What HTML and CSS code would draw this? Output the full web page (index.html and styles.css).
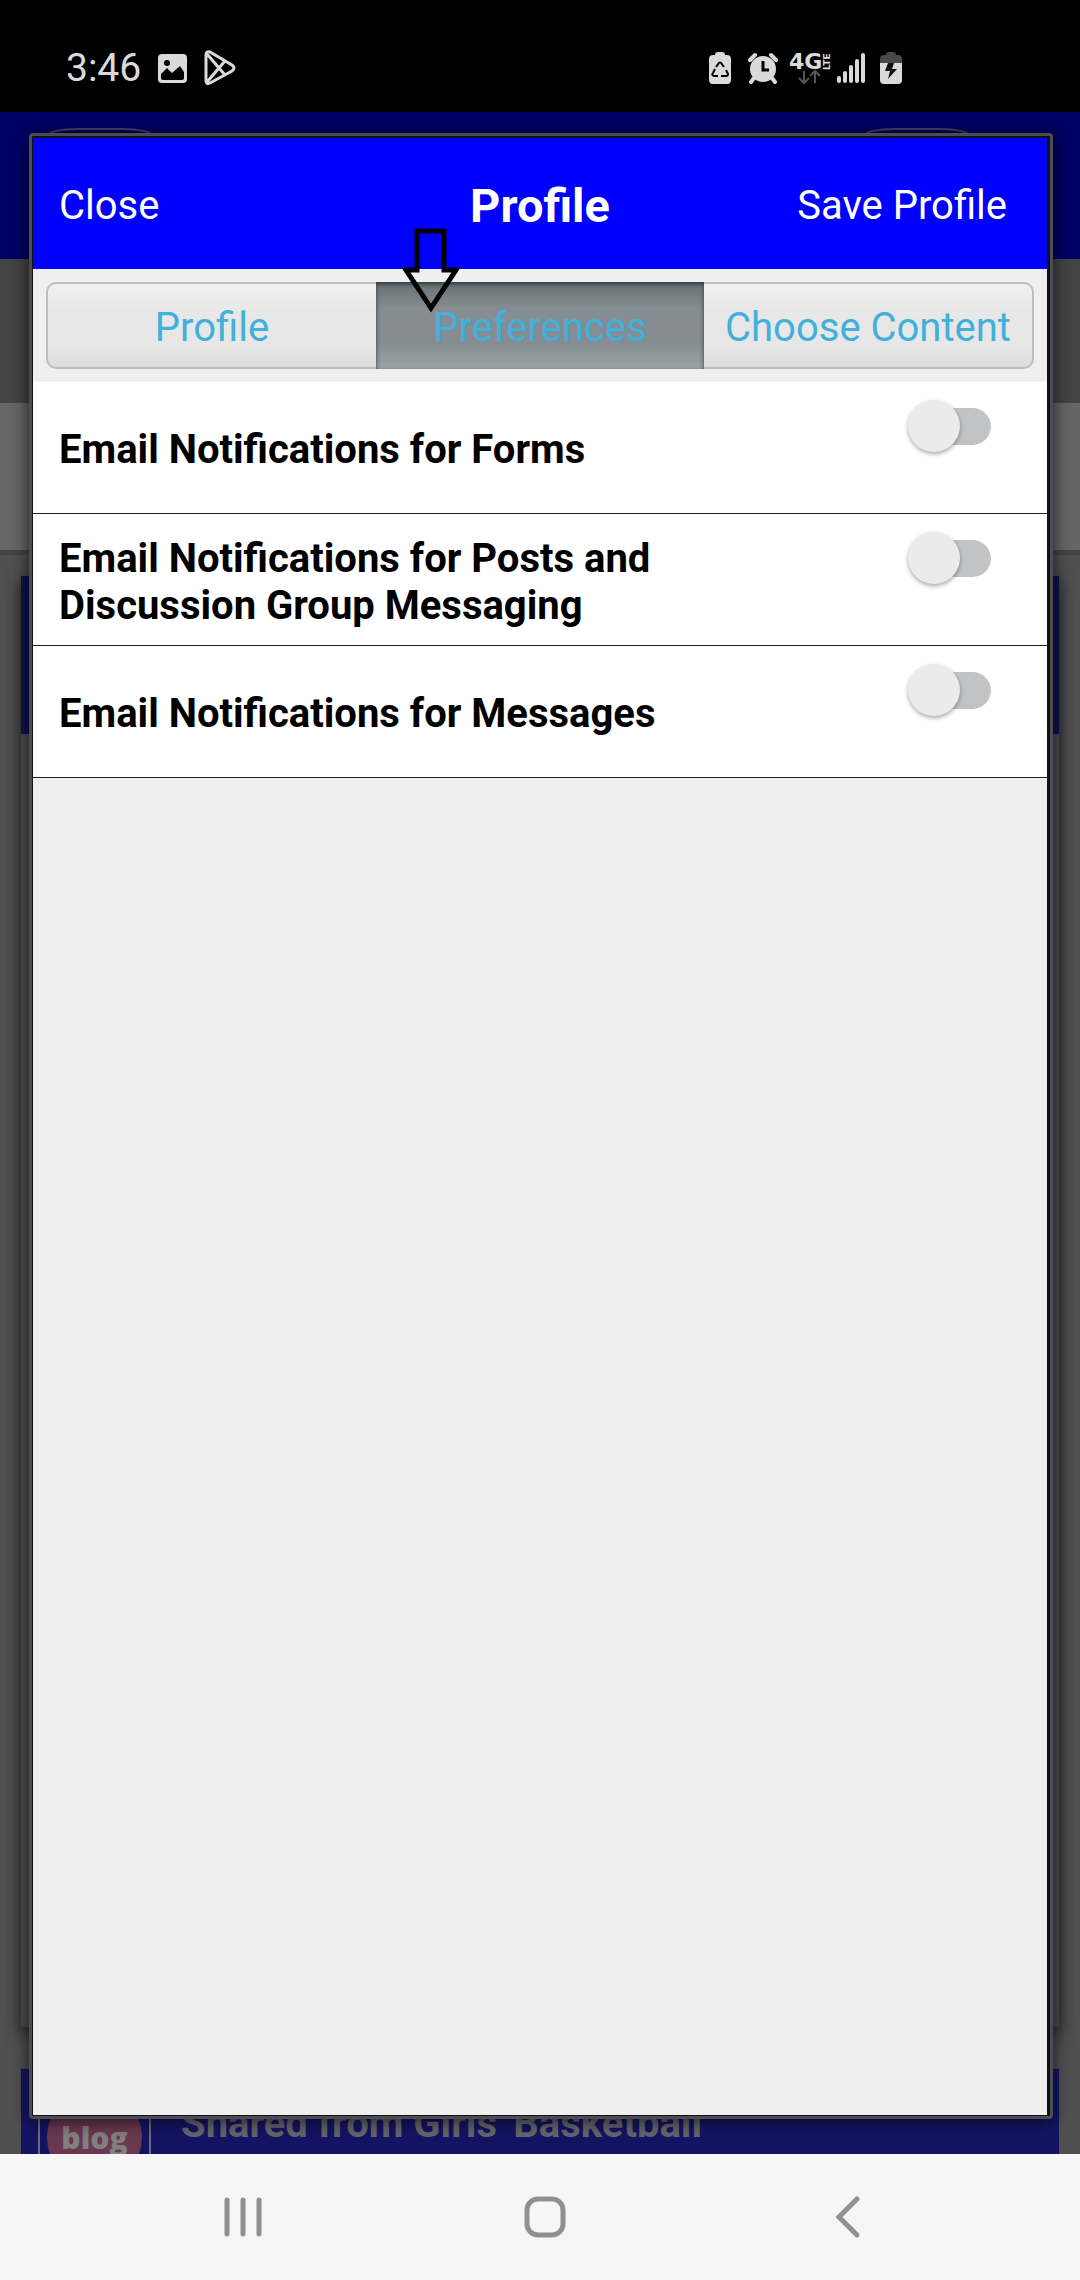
FILE: index.html
```html
<!DOCTYPE html>
<html lang="en">
<head>
<meta charset="utf-8">
<meta name="viewport" content="width=device-width, initial-scale=1">
<title>Profile</title>
<link rel="stylesheet" href="styles.css">
</head>
<body>
<div class="phone">
  <div class="status">
    <span class="clock">3:46</span>
    <svg class="status-picture" width="29" height="29" viewBox="0 0 29 29"><rect width="29" height="29" rx="4" fill="#dadada"/><circle cx="9" cy="9" r="3" fill="#000"/><path d="M3 20l6-6 5 5 8-7 4 6v6q0 2-2 2H5q-2 0-2-2z" fill="#000"/></svg>
    <svg width="32" height="36" viewBox="0 0 32 36" fill="none" stroke="#dadada" stroke-width="3" stroke-linejoin="round"><path d="M2 5Q2 1 6 2L28 15Q32 18 28 21L6 33Q2 35 2 31zM3 4L21 25M3 32L21 11"/></svg>
    <div class="status-right">
      <svg width="22" height="32" viewBox="0 0 22 32"><path d="M6 3q0-3 3-3h4q3 0 3 3h2q4 0 4 4v21q0 4-4 4H4q-4 0-4-4V7q0-4 4-4z" fill="#dadada"/><path d="M7 15l3-4q1-1 2 0l3 4M17 18l2 4q0 2-2 2h-5M9 24H5q-3-1-1-3l2-4" fill="none" stroke="#000" stroke-width="2"/></svg>
      <svg class="alarm" width="30" height="31" viewBox="0 0 30 31"><circle cx="15" cy="16" r="13" fill="#dadada"/><path d="M2 7l5-5M28 7l-5-5M6 25l-3 4M24 25l3 4" stroke="#dadada" stroke-width="4" stroke-linecap="round"/><path d="M15 8v9h6" fill="none" stroke="#000" stroke-width="3"/></svg>
      <svg class="network" width="42" height="33" viewBox="0 0 42 33"><text class="network-gen" x="0" y="17">4G</text><text class="network-lte" transform="translate(41 18) rotate(-90)">LTE</text><path d="M15 19v12M10 26l5 5 5-5M26 31V19M21 24l5-5 5 5" fill="none" stroke="#555" stroke-width="2"/></svg>
      <svg class="signal" width="29" height="30" viewBox="0 0 29 30" stroke="#dadada" stroke-width="4" stroke-linecap="round"><path d="M2 25v3M8 20v8M14 14v14M20 8v20M26 2v26"/></svg>
      <svg width="22" height="32" viewBox="0 0 22 32"><path d="M0 11V7q0-4 4-4h2q0-3 3-3h4q3 0 3 3h2q4 0 4 4v4z" fill="#484848"/><path d="M0 11h22v17q0 4-4 4H4q-4 0-4-4z" fill="#dadada"/><path d="M8 11h6l-2 6h5L8 27l2-8H5z" fill="#111"/></svg>
    </div>
  </div>

  <div class="stage">
    <div class="backdrop">
      <div class="back-header"><i class="pill"></i><i class="pill"></i></div>
      <div class="back-band"></div>
      <div class="back-light"></div>
      <div class="feed">
        <div class="card"><div class="card-top"></div></div>
        <div class="card-next">
          <div class="blog-frame"><span class="blog">blog</span></div>
          <span class="shared">Shared from Girls' Basketball</span>
        </div>
      </div>
    </div>

    <main class="dialog">
      <header class="bar">
        <button class="bar-button" type="button">Close</button>
        <h1 class="title">Profile</h1>
        <button class="bar-button bar-save" type="button">Save Profile</button>
      </header>
      <div class="tabs-area">
        <div class="tabs">
          <button class="tab" type="button">Profile</button>
          <button class="tab tab-on" type="button">Preferences
            <svg class="pointer" width="60" height="86" viewBox="0 0 60 86" fill="none" stroke="#000" stroke-width="5"><path d="M16 3h27v39h12L30 80 5 42h11z"/></svg>
          </button>
          <button class="tab" type="button">Choose Content</button>
        </div>
      </div>
      <div class="row">
        <label class="row-label" for="forms">Email Notifications for Forms</label>
        <input class="switch" type="checkbox" id="forms">
      </div>
      <div class="row">
        <label class="row-label" for="posts">Email Notifications for Posts and Discussion Group Messaging</label>
        <input class="switch" type="checkbox" id="posts">
      </div>
      <div class="row">
        <label class="row-label" for="messages">Email Notifications for Messages</label>
        <input class="switch" type="checkbox" id="messages">
      </div>
    </main>
  </div>

  <nav class="nav">
    <button class="nav-button" type="button" aria-label="Recents"><svg width="42" height="42" viewBox="0 0 42 42" stroke="#909090" stroke-width="5" stroke-linecap="round"><path d="M5 4v34M21 4v34M37 4v34"/></svg></button>
    <button class="nav-button" type="button" aria-label="Home"><svg width="42" height="42" viewBox="0 0 42 42" fill="none" stroke="#909090" stroke-width="5"><rect x="3" y="3" width="36" height="36" rx="11"/></svg></button>
    <button class="nav-button" type="button" aria-label="Back"><svg width="42" height="42" viewBox="0 0 42 42" fill="none" stroke="#909090" stroke-width="5" stroke-linecap="round"><path d="M30 3L12 21l18 18"/></svg></button>
  </nav>
</div>
</body>
</html>
```
FILE: styles.css
```css
* {
  box-sizing: border-box;
}

body {
  margin: 0;
  font-family: Roboto, "Liberation Sans", sans-serif;
  font-size: 40px;
  line-height: 47px;
}

button {
  border: 0;
  padding: 0;
  background: none;
  font: inherit;
}

svg {
  flex: none;
  display: block;
  overflow: visible;
}

.phone {
  display: flex;
  flex-direction: column;
  min-height: 100vh;
}

/* Status bar */
.status {
  display: flex;
  align-items: center;
  height: 112px;
  padding: 24px 178px 0 66px;
  background: #000;
  color: #dadada;
}

.clock {
  font-size: 39px;
}

.status-picture {
  margin: 0 17px 0 17px;
}

.status-right {
  display: flex;
  align-items: center;
  margin-left: auto;
}

.alarm {
  margin: 0 11px 0 17px;
}

.network {
  fill: #dadada;
  font-family: "DejaVu Sans", sans-serif;
  font-weight: bold;
}

.network-gen {
  font-size: 22px;
}

.network-lte {
  font-size: 9px;
}

.signal {
  margin: 0 14px 0 6px;
}

/* The dimmed page and the dialog share one grid cell */
.stage {
  flex: 1;
  display: grid;
  grid-template-columns: minmax(0, 1fr);
}

.backdrop,
.dialog {
  grid-area: 1 / 1;
  display: flex;
  flex-direction: column;
}

.back-header {
  display: flex;
  justify-content: space-between;
  height: 147px;
  padding: 16px 109px 16px 46px;
  background: #000066;
}

.pill {
  width: 108px;
  border: 2px solid #46466a;
  border-radius: 32px / 8px;
}

.back-band {
  height: 144px;
  background: #444;
}

.back-light {
  height: 152px;
  border-bottom: 5px solid #444;
  background: #666;
}

.feed {
  flex: 1;
  display: flex;
  flex-direction: column;
  gap: 42px;
  padding: 21px 21px 0;
  background: #505050;
}

.card {
  flex: 1;
  background: #4c4c4c;
  box-shadow: 0 6px 16px #222;
}

.card-top {
  height: 158px;
  background: #10104e;
}

.card-next {
  display: flex;
  gap: 30px;
  height: 85px;
  padding: 12px 17px 0;
  overflow: hidden;
  background: #141464;
}

.blog-frame {
  flex: none;
  width: 113px;
  height: 113px;
  padding: 7px;
  border: 2px solid #6c6c80;
}

.blog {
  display: grid;
  place-items: center;
  height: 95px;
  border-radius: 50%;
  background: #6b3850;
  color: #808080;
  font-family: "Open Sans", sans-serif;
  font-size: 30px;
  font-weight: 800;
}

.shared {
  padding-top: 19px;
  color: #66666e;
  font-weight: bold;
  white-space: nowrap;
}

/* Dialog */
.dialog {
  margin: 21px 27px 35px 29px;
  border: 3px solid #4c4c54;
  border-radius: 4px;
  padding: 2px 3px 1px 1px;
  background: linear-gradient(#efefef, #efefef) content-box, #111;
  box-shadow: 0 2px 18px rgb(0 0 0 / 70%);
}

.bar {
  display: grid;
  grid-template-columns: 1fr auto 1fr;
  align-items: center;
  height: 131px;
  padding: 4px 26px 0;
  background: #00f;
  color: #fff;
}

.bar-button {
  justify-self: start;
  color: #fff;
}

.bar-save {
  justify-self: end;
  padding-right: 14px;
}

.title {
  margin: 0;
  font-size: 47px;
  font-weight: bold;
}

.tabs-area {
  padding: 13px;
}

.tabs {
  display: grid;
  grid-template-columns: 1fr 1fr 1fr;
  height: 87px;
  border: 2px solid #bebebe;
  border-radius: 10px;
  background: linear-gradient(#efefef, #e7e7e7 40%, #e7e7e7 75%, #dcdcdc);
}

.tab {
  position: relative;
  padding-top: 3px;
  color: #41b0db;
  white-space: nowrap;
}

.tab-on {
  margin: -2px 0;
  background: linear-gradient(#667075, #858d92 30%, #858d92 70%, #9aa3a8);
  box-shadow: inset 0 2px 4px #30383c;
}

.pointer {
  position: absolute;
  left: 25px;
  top: -54px;
}

.row {
  display: flex;
  align-items: center;
  justify-content: space-between;
  height: 132px;
  padding: 4px 56px 0 26px;
  border-bottom: 1px solid #222;
  background: #fff;
  color: #000;
}

.row-label {
  width: 70%;
  font-weight: bold;
}

.switch {
  appearance: none;
  align-self: flex-start;
  display: grid;
  align-items: center;
  width: 83px;
  height: 52px;
  margin: 14px 0 0;
}

.switch::before,
.switch::after {
  content: "";
  grid-area: 1 / 1;
}

.switch::before {
  height: 37px;
  margin-left: 8px;
  border-radius: 19px;
  background: #c2c3c5;
}

.switch::after {
  width: 52px;
  height: 52px;
  border-radius: 50%;
  background: #ebebeb;
  box-shadow: 0 2px 4px rgb(0 0 0 / 35%);
}

.switch:checked::after {
  justify-self: end;
}

/* System navigation */
.nav {
  display: grid;
  grid-template-columns: 1fr 1fr 1fr;
  height: 126px;
  padding: 0 81px 0 92px;
  background: #f6f6f6;
}

.nav-button {
  display: grid;
  place-items: center;
}
```
